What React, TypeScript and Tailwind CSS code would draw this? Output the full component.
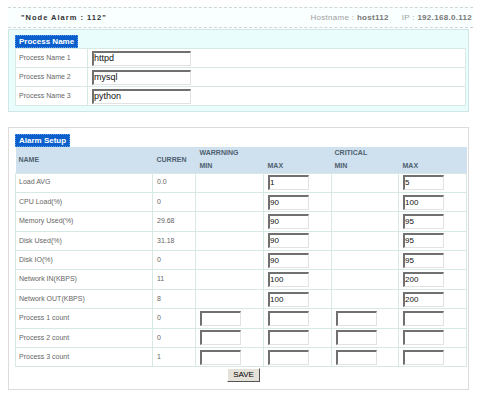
import React from 'react';

const FONT = { fontFamily: '"Liberation Sans", Arial, sans-serif' };

const processNames = ['httpd', 'mysql', 'python'];

interface AlarmRow {
  name: string;
  current: string;
  warnMin?: string | null;
  warnMax?: string;
  critMin?: string | null;
  critMax?: string;
}

const rows: AlarmRow[] = [
  { name: 'Load AVG', current: '0.0', warnMin: null, warnMax: '1', critMin: null, critMax: '5' },
  { name: 'CPU Load(%)', current: '0', warnMin: null, warnMax: '90', critMin: null, critMax: '100' },
  { name: 'Memory Used(%)', current: '29.68', warnMin: null, warnMax: '90', critMin: null, critMax: '95' },
  { name: 'Disk Used(%)', current: '31.18', warnMin: null, warnMax: '90', critMin: null, critMax: '95' },
  { name: 'Disk IO(%)', current: '0', warnMin: null, warnMax: '90', critMin: null, critMax: '95' },
  { name: 'Network IN(KBPS)', current: '11', warnMin: null, warnMax: '100', critMin: null, critMax: '200' },
  { name: 'Network OUT(KBPS)', current: '8', warnMin: null, warnMax: '100', critMin: null, critMax: '200' },
  { name: 'Process 1 count', current: '0', warnMin: '', warnMax: '', critMin: '', critMax: '' },
  { name: 'Process 2 count', current: '0', warnMin: '', warnMax: '', critMin: '', critMax: '' },
  { name: 'Process 3 count', current: '1', warnMin: '', warnMax: '', critMin: '', critMax: '' },
];

function Field({ value, className = '' }: { value: string; className?: string }) {
  return (
    <div
      className={`h-[15px] bg-white border border-t-2 border-l-2 border-t-[#707070] border-l-[#707070] border-b-[#e2e2e2] border-r-[#e2e2e2] leading-[11px] text-[#111] ${className}`}
    >
      {value}
    </div>
  );
}

function Badge({ label }: { label: string }) {
  return (
    <div className="w-fit h-[13px] px-[3px] bg-[#0a5fcc] border border-dotted border-[#5b9be8] text-white text-[8px] font-bold leading-[11px]">
      {label}
    </div>
  );
}

function Cell({ value }: { value: string | null | undefined }) {
  return (
    <td className="border border-[#d6e9e5] px-[4px] py-0">
      {value !== null && value !== undefined ? <Field value={value} className="w-[41px] text-[8px]" /> : null}
    </td>
  );
}

export default function App() {
  return (
    <div className="w-[480px] h-[397px] bg-white overflow-hidden pt-[7px]" style={FONT}>
      {/* Header */}
      <div className="mx-[8px] w-[465px] h-[21px] border-y border-dashed border-[#cfd6d6] bg-[#f9fefe] flex items-center justify-between pl-[13px] pr-[1px]">
        <span className="text-[7.5px] font-bold tracking-[1px] text-[#333]">"Node Alarm : 112"</span>
        <span className="text-[8px] tracking-[0.3px] text-[#a0a0a0]">
          Hostname : <b className="text-[#777]">host112</b>
          <span className="ml-[13px]">IP : </span>
          <b className="text-[#777]">192.168.0.112</b>
        </span>
      </div>

      {/* Process names */}
      <div className="mt-[1px] mx-[8px] w-[461px] border border-[#cfe6e6] bg-[#e9fdfd] pl-[6px] pr-[2px] pt-[5px] pb-[5px]">
        <Badge label="Process Name" />
        <table className="w-[451px] border-collapse bg-white text-[7px] text-[#666]">
          <tbody>
            {processNames.map((p, i) => (
              <tr key={p} className="h-[19px]">
                <td className="w-[72px] border border-[#d6e9e5] pl-[3px] py-0">Process Name {i + 1}</td>
                <td className="border border-[#d6e9e5] pl-[4px] py-0">
                  <Field value={p} className="w-[99px] text-[9px]" />
                </td>
              </tr>
            ))}
          </tbody>
        </table>
      </div>

      {/* Alarm setup */}
      <div className="mt-[15px] mx-[8px] w-[461px] h-[263px] border border-[#dcdcdc] bg-white pl-[6px] pr-[2px] pt-[6px]">
        <Badge label="Alarm Setup" />
        <table className="w-[451px] border-collapse text-[7px] text-[#666] table-fixed">
          <colgroup>
            <col className="w-[137px]" />
            <col className="w-[43px]" />
            <col className="w-[68px]" />
            <col className="w-[68px]" />
            <col className="w-[67px]" />
            <col className="w-[68px]" />
          </colgroup>
          <thead className="bg-[#cfe0ee] text-[7px] font-bold text-[#4d5f6f]">
            <tr className="h-[13px]">
              <th rowSpan={2} className="text-left pl-[3px] font-bold border-b border-[#d6e9e5]">NAME</th>
              <th rowSpan={2} className="text-left pl-[4px] font-bold border-b border-[#d6e9e5]">CURREN</th>
              <th colSpan={2} className="text-left pl-[4px] font-bold">WARRNING</th>
              <th colSpan={2} className="text-left pl-[3px] font-bold">CRITICAL</th>
            </tr>
            <tr className="h-[13px]">
              <th className="text-left pl-[4px] font-bold border-b border-[#d6e9e5]">MIN</th>
              <th className="text-left pl-[4px] font-bold border-b border-[#d6e9e5]">MAX</th>
              <th className="text-left pl-[3px] font-bold border-b border-[#d6e9e5]">MIN</th>
              <th className="text-left pl-[4px] font-bold border-b border-[#d6e9e5]">MAX</th>
            </tr>
          </thead>
          <tbody>
            {rows.map((r) => (
              <tr key={r.name} className="h-[19.4px]">
                <td className="border border-[#d6e9e5] pl-[3px] py-0">{r.name}</td>
                <td className="border border-[#d6e9e5] pl-[4px] py-0">{r.current}</td>
                <Cell value={r.warnMin} />
                <Cell value={r.warnMax} />
                <Cell value={r.critMin} />
                <Cell value={r.critMax} />
              </tr>
            ))}
          </tbody>
        </table>
        <div className="flex justify-center pt-[1px] pl-[6px]">
          <button className="h-[14px] w-[33px] bg-[#e4e2d8] border border-t-white border-l-white border-b-[#555] border-r-[#555] text-[8px] leading-[12px] text-black">
            SAVE
          </button>
        </div>
      </div>
    </div>
  );
}
